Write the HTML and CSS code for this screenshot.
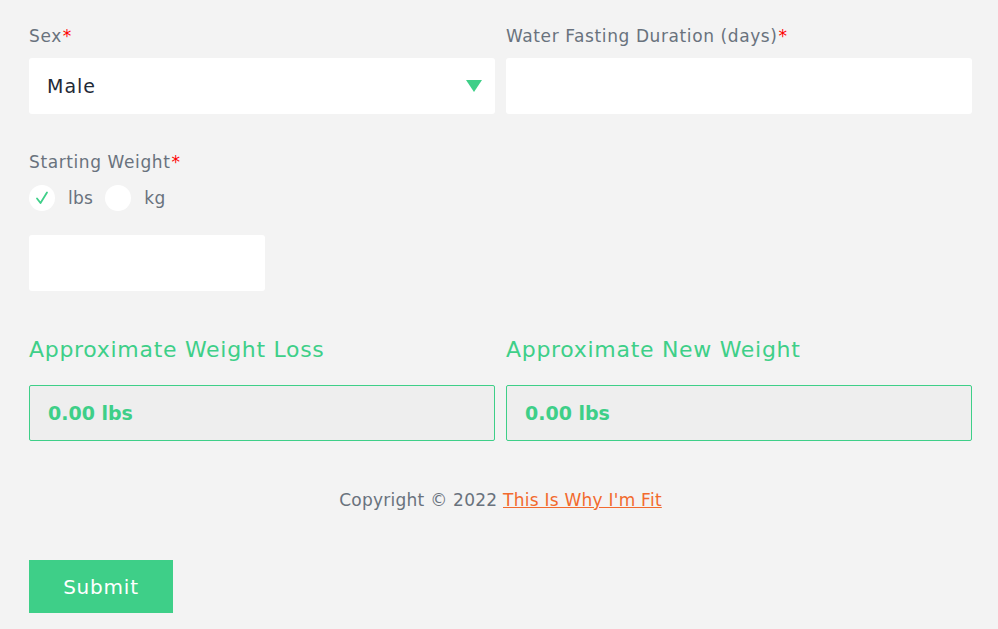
FILE: index.html
```html
<!DOCTYPE html>
<html>
<head>
<meta charset="utf-8">
<link rel="stylesheet" href="styles.css">
</head>
<body>
<form class="calc">
  <div class="row">
    <div class="field">
      <label class="label">Sex<span class="req">*</span></label>
      <div class="select">
        <span>Male</span>
        <svg class="caret" width="16" height="12" viewBox="0 0 16 12"><path d="M0 0H16L8 12Z" fill="#3ecf88"/></svg>
      </div>
    </div>
    <div class="field">
      <label class="label">Water Fasting Duration (days)<span class="req">*</span></label>
      <div class="input"></div>
    </div>
  </div>

  <div class="field weight">
    <label class="label">Starting Weight<span class="req">*</span></label>
    <div class="radios">
      <span class="radio"><svg width="16" height="16" viewBox="0 0 16 16"><path d="M3 8.5L6.5 13L13 2.5" fill="none" stroke="#3ecf88" stroke-width="1.8" stroke-linecap="round" stroke-linejoin="round"/></svg></span>
      <span class="opt">lbs</span>
      <span class="radio"></span>
      <span class="opt">kg</span>
    </div>
    <div class="input small"></div>
  </div>

  <div class="row results">
    <div class="field">
      <h3 class="heading">Approximate Weight Loss</h3>
      <div class="result">0.00 lbs</div>
    </div>
    <div class="field">
      <h3 class="heading">Approximate New Weight</h3>
      <div class="result">0.00 lbs</div>
    </div>
  </div>

  <p class="copy">Copyright © 2022 <a href="#">This Is Why I'm Fit</a></p>

  <button type="button" class="submit">Submit</button>
</form>
</body>
</html>
```
FILE: styles.css
```css
html, body {
  margin: 0;
  padding: 0;
  background: #f3f3f3;
}
body {
  font-family: "DejaVu Sans", "Open Sans", sans-serif;
  color: #69727d;
}
.calc {
  width: 943px;
  padding: 24px 0 0 29px;
  display: flex;
  flex-direction: column;
}
.row {
  display: grid;
  grid-template-columns: 466px 466px;
  column-gap: 11px;
}
.field {
  display: flex;
  flex-direction: column;
}
.label {
  font-size: 17px;
  letter-spacing: 0.6px;
  line-height: 24px;
  color: #69727d;
  height: 24px;
  margin-bottom: 10px;
}
.req {
  color: #ff0000;
  margin-left: 1px;
}
.select, .input {
  height: 56px;
  background: #ffffff;
  border-radius: 3px;
  box-sizing: border-box;
}
.select {
  display: flex;
  align-items: center;
  justify-content: space-between;
  padding: 0 13px 0 18px;
  font-size: 19px;
  letter-spacing: 1px;
  color: #1f2a37;
}
.weight {
  margin-top: 36px;
}
.radios {
  display: flex;
  align-items: center;
  height: 26px;
  margin-top: 1px;
}
.radio {
  width: 26px;
  height: 26px;
  border-radius: 50%;
  background: #fff;
  display: flex;
  align-items: center;
  justify-content: center;
}
.opt {
  font-size: 17px;
  letter-spacing: 0.3px;
  color: #69727d;
  margin: 0 12px 0 13px;
}
.input.small {
  width: 236px;
  margin-top: 24px;
}
.results {
  margin-top: 45px;
}
.heading {
  margin: 0;
  font-weight: 400;
  font-size: 22px;
  letter-spacing: 0.7px;
  line-height: 28px;
  color: #3ecf88;
  height: 28px;
  margin-bottom: 21px;
}
.result {
  height: 56px;
  box-sizing: border-box;
  border: 1px solid #3ecf88;
  border-radius: 2px;
  background: #eeeeee;
  display: flex;
  align-items: center;
  padding-left: 18px;
  font-size: 19px;
  font-weight: 700;
  color: #3ecf88;
}
.copy {
  margin: 47px 0 0;
  text-align: center;
  font-size: 17px;
  letter-spacing: 0.25px;
  line-height: 24px;
  color: #69727d;
}
.copy a {
  color: #f26a2e;
  text-decoration: underline;
}
.submit {
  margin-top: 48px;
  align-self: flex-start;
  width: 144px;
  height: 53px;
  border: 0;
  background: #3ecf88;
  color: #fff;
  font-family: inherit;
  font-size: 20px;
  letter-spacing: 0.8px;
  cursor: pointer;
}
```
